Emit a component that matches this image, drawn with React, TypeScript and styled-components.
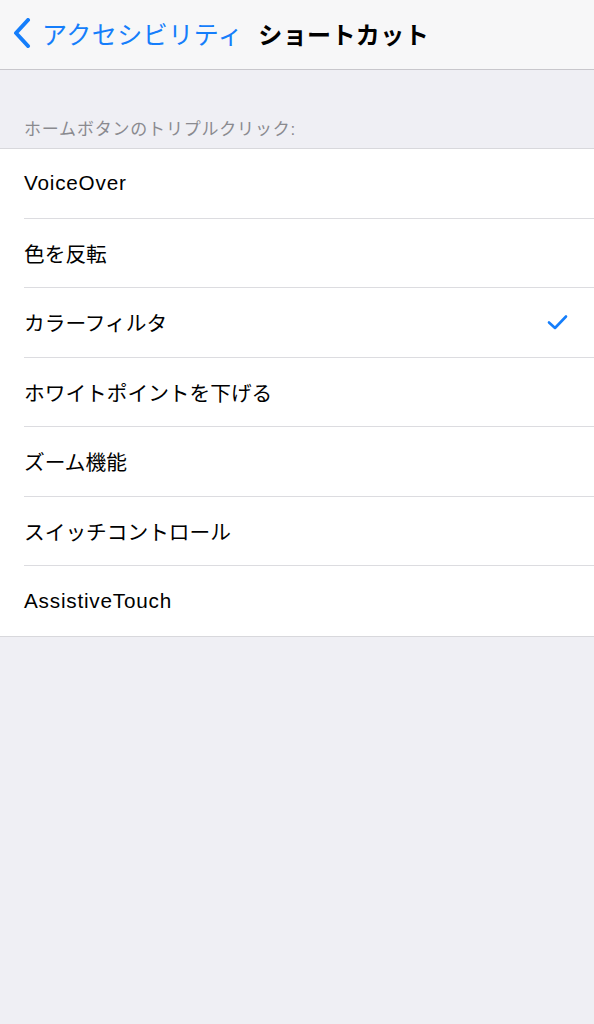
import styled, { createGlobalStyle } from "styled-components";

const GlobalStyle = createGlobalStyle`
    html, body {
        margin: 0;
        padding: 0;
        background: #efeff4;
    }
    body {
        font-family: "Liberation Sans", "Noto Sans CJK JP", sans-serif;
    }
`;

const Page = styled.div`
    width: 594px;
    min-height: 1024px;
    background: #efeff4;
`;

const NavBar = styled.div`
    display: flex;
    align-items: center;
    background: #f7f7f8;
    border-bottom: 1px solid #c8c7cc;
    padding-left: 12px;
    padding-bottom: 3px;
    box-sizing: border-box;
    height: 70px;
`;

const BackButton = styled.div`
    display: flex;
    align-items: center;
    color: #157efb;
    font-size: 25px;
    letter-spacing: 0.5px;
    svg {
        margin-right: 10px;
    }
`;

const Title = styled.div`
    margin-left: 15px;
    font-size: 24px;
    font-weight: 700;
    color: #000;
    letter-spacing: 0.4px;
`;

const SectionHeader = styled.div`
    padding: 45px 0 0 24px;
    height: 33px;
    font-size: 17px;
    color: #8a8a8f;
    letter-spacing: 0.8px;
`;

const List = styled.div`
    background: #fff;
    border-top: 1px solid #d8d8dc;
    border-bottom: 1px solid #d8d8dc;
`;

const Row = styled.div<{ $last?: boolean }>`
    height: 69.5px;
    display: flex;
    align-items: center;
    justify-content: space-between;
    margin-left: 24px;
    padding-right: 26px;
    box-sizing: border-box;
    border-bottom: ${(p) => (p.$last ? "none" : "1px solid #dcdce0")};
    font-size: 20.7px;
    color: #000;
`;

const Label = styled.span<{ $latin?: boolean }>`
    letter-spacing: ${(p) => (p.$latin ? "0.8px" : "0")};
`;

const items = [
    "VoiceOver",
    "色を反転",
    "カラーフィルタ",
    "ホワイトポイントを下げる",
    "ズーム機能",
    "スイッチコントロール",
    "AssistiveTouch",
];

function Check() {
    return (
        <svg width="21" height="16" viewBox="0 0 21 16">
            <path
                d="M2 8.5 L8 14 L19 2.5"
                fill="none"
                stroke="#157efb"
                strokeWidth="2.6"
                strokeLinecap="round"
                strokeLinejoin="round"
            />
        </svg>
    );
}

function App() {
    return (
        <Page>
            <GlobalStyle />
            <NavBar>
                <BackButton>
                    <svg width="20" height="30" viewBox="0 0 20 30">
                        <path
                            d="M16 2 L4 15 L16 28"
                            fill="none"
                            stroke="#157efb"
                            strokeWidth="4"
                            strokeLinecap="round"
                            strokeLinejoin="round"
                        />
                    </svg>
                    アクセシビリティ
                </BackButton>
                <Title>ショートカット</Title>
            </NavBar>
            <SectionHeader>ホームボタンのトリプルクリック:</SectionHeader>
            <List>
                {items.map((t, i) => (
                    <Row key={t} $last={i === items.length - 1}>
                        <Label $latin={/^[A-Za-z]/.test(t)}>{t}</Label>
                        {t === "カラーフィルタ" && <Check />}
                    </Row>
                ))}
            </List>
        </Page>
    );
}

export default App;
